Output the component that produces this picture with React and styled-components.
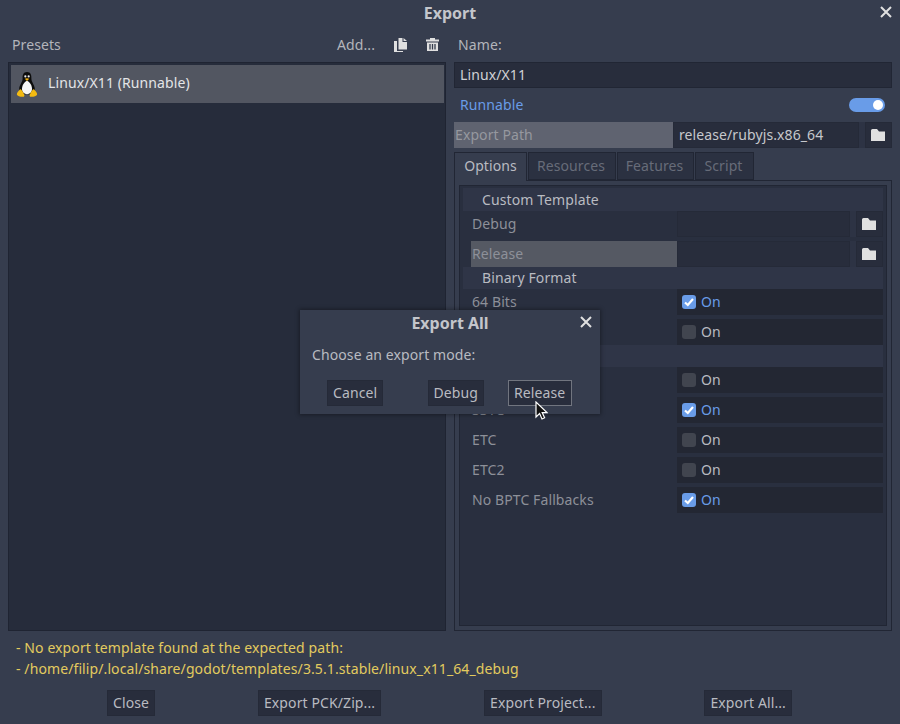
import styled, { createGlobalStyle } from "styled-components";

const GlobalStyle = createGlobalStyle`
  html, body {
    margin: 0;
    padding: 0;
    width: 900px;
    height: 724px;
    overflow: hidden;
    background: #363d4e;
  }
  * { box-sizing: border-box; }
`;

const Page = styled.div`
  position: relative;
  width: 900px;
  height: 724px;
  display: flex;
  flex-direction: column;
  background: #363d4e;
  color: #b9bbc1;
  font-family: "Noto Sans", sans-serif;
  font-size: 14px;
  line-height: 20px;
  letter-spacing: 0.1px;
`;

const TitleBar = styled.div`
  height: 26px;
  display: grid;
  grid-template-columns: 1fr auto 1fr;
  align-items: center;
  padding: 0 8px;
`;

const Title = styled.div`
  grid-column: 2;
  font-size: 16px;
  font-weight: 700;
  letter-spacing: 0;
  color: #c4c6cb;
`;

const CloseBtn = styled.svg`
  width: 12px;
  height: 12px;
  justify-self: end;
  margin-top: -2px;
  fill: none;
  stroke: #e0e0e0;
  stroke-width: 2;
`;

const Columns = styled.div`
  flex: 1;
  display: flex;
  gap: 8px;
  padding: 0 8px;
  min-height: 0;
`;

const Column = styled.div`
  width: 438px;
  display: flex;
  flex-direction: column;
`;

const HeadRow = styled.div`
  height: 36px;
  padding: 9px 4px 0 4px;
  display: flex;
  align-items: flex-start;
  color: #b3b5bb;
`;

const HeadTools = styled.div`
  margin-left: auto;
  display: flex;
  align-items: center;
`;

const AddLabel = styled.span`
  margin-right: 17px;
`;

const ToolIcon = styled.svg`
  width: 16px;
  height: 16px;
  margin-top: -1px;
  fill: #e0e0e0;
  margin-right: ${(p) => p.$right || 0}px;
`;

const PresetTree = styled.div`
  flex: 1;
  background: #262c3b;
  border: 1px solid #1f2432;
  padding: 2px 1px 2px 2px;
`;

const PresetItem = styled.div`
  height: 38px;
  background: #525661;
  color: #e4e5e7;
  display: flex;
  align-items: center;
  padding: 0 0 2px 5px;
  gap: 10px;
`;

const TuxIcon = styled.svg`
  width: 22px;
  height: 27px;
  margin-top: 3px;
`;

const NameInput = styled.div`
  height: 26px;
  background: #282d3c;
  border: 1px solid #212634;
  color: #d0d1d5;
  padding-left: 5px;
  display: flex;
  align-items: center;
`;

const SwitchRow = styled.div`
  height: 26px;
  margin-top: 4px;
  padding: 0 7px 0 6px;
  display: flex;
  align-items: center;
  justify-content: space-between;
  color: #699ce8;
`;

const Toggle = styled.div`
  width: 36px;
  height: 14px;
  border-radius: 7px;
  background: #699ce8;
  display: flex;
  align-items: center;
  justify-content: flex-end;
  padding-right: 2px;
`;

const Knob = styled.div`
  width: 10px;
  height: 10px;
  border-radius: 50%;
  background: #fff;
`;

const PathRow = styled.div`
  height: 26px;
  margin-top: 4px;
  display: grid;
  grid-template-columns: 219px 1fr;
`;

const HighlightLabel = styled.div`
  background: ${(p) => p.$bg};
  color: #96989f;
  padding-left: 1px;
  display: flex;
  align-items: center;
`;

const PathEditor = styled.div`
  display: flex;
  background: #2d3344;
`;

const LineEdit = styled.div`
  flex: 1;
  background: #282d3c;
  border: 1px solid #252a38;
  color: #c6c8cc;
  padding-left: 5px;
  display: flex;
  align-items: center;
`;

const FolderBtn = styled.div`
  width: 27px;
  margin-left: 6px;
  background: #282d3c;
  border: 1px solid #252a38;
  padding-right: 1px;
  display: flex;
  align-items: center;
  justify-content: center;
`;

const FolderIcon = styled.svg`
  width: 14px;
  height: 12px;
  fill: #e0e0e0;
`;

const TabBar = styled.div`
  height: 28px;
  margin-top: 4px;
  display: flex;
  gap: 1px;
`;

const Tab = styled.div`
  width: ${(p) => p.$w}px;
  height: ${(p) => (p.$active ? 29 : 28)}px;
  background: ${(p) => (p.$active ? "#363d4e" : "#2b3141")};
  border: 1px solid #212634;
  border-bottom: ${(p) => (p.$active ? "none" : "1px solid #212634")};
  color: ${(p) => (p.$active ? "#b9bbc1" : "#676c79")};
  position: relative;
  z-index: ${(p) => (p.$active ? 1 : 0)};
  padding-bottom: ${(p) => (p.$active ? 2 : 1)}px;
  padding-right: ${(p) => (p.$active ? 0 : 2)}px;
  display: flex;
  align-items: center;
  justify-content: center;
`;

const TabPanel = styled.div`
  flex: 1;
  border: 1px solid #212634;
  padding: 4px;
  display: flex;
`;

const OptionsTree = styled.div`
  flex: 1;
  background: #292f3f;
  border: 1px solid #212634;
  padding: 2px 3px;
`;

const Section = styled.div`
  height: ${(p) => (p.$tall ? 23 : 22)}px;
  background: #2f3547;
  color: #b9bbc1;
  padding-left: 19px;
  display: flex;
  align-items: center;
`;

const Group = styled.div`
  display: flex;
  flex-direction: column;
  gap: 4px;
`;

const Prop = styled.div`
  margin-left: 8px;
  height: 26px;
  display: grid;
  grid-template-columns: 206px 206px;
`;

const PropLabel = styled.div`
  padding-left: 1px;
  color: #8d9099;
  display: flex;
  align-items: center;
  background: ${(p) => (p.$hover ? "#555963" : "transparent")};
`;

const PropEditor = styled.div`
  display: flex;
  background: #2d3344;
`;

const CheckCell = styled.div`
  background: #232733;
  display: flex;
  align-items: center;
  padding-left: 5px;
  gap: 5px;
  color: ${(p) => (p.$on ? "#699ce8" : "#b9bbc1")};
`;

const Box = styled.div`
  width: 14px;
  height: 14px;
  border-radius: 3px;
  background: ${(p) => (p.$on ? "#699ce8" : "#41454f")};
  display: flex;
  align-items: center;
  justify-content: center;
`;

const Warnings = styled.div`
  height: 59px;
  padding: 6px 0 0 16px;
  color: #e3cb5e;
  line-height: 21px;
`;

const Footer = styled.div`
  height: 34px;
  padding: 0 5px 8px 4px;
  display: flex;
  justify-content: space-evenly;
`;

const Button = styled.div`
  height: 26px;
  ${(p) => p.$w && `width: ${p.$w}px;`}
  background: #282d3c;
  border: 1px solid ${(p) => (p.$hover ? "#71757f" : "#252a38")};
  color: #b9bbc1;
  padding: 0 5px;
  display: flex;
  align-items: center;
`;

const Modal = styled.div`
  position: absolute;
  left: 300px;
  top: 310px;
  width: 300px;
  height: 104px;
  background: #363d4e;
  box-shadow: 0 0 4px 1px rgba(0, 0, 0, 0.35);
  display: flex;
  flex-direction: column;
`;

const ModalHead = styled.div`
  height: 26px;
  display: grid;
  grid-template-columns: 1fr auto 1fr;
  align-items: center;
  padding: 0 8px;
`;

const ModalText = styled.div`
  padding-left: 12px;
  margin-top: 9px;
`;

const ModalButtons = styled.div`
  margin-top: 15px;
  padding: 0 28px 0 27px;
  display: flex;
  justify-content: space-between;
`;

const ModalSpread = styled.div`
  display: flex;
  gap: 24px;
`;

const Cursor = styled.svg`
  position: absolute;
  left: 535px;
  top: 401px;
  width: 13px;
  height: 19px;
`;

const Folder = () => (
  <FolderIcon viewBox="0 0 14 12">
    <path d="M0 1.5 Q0 0 1.5 0 H6 L8 2.5 H14 V12 H0 Z" />
  </FolderIcon>
);

const Check = () => (
  <svg width="10" height="10" viewBox="0 0 10 10" fill="none" stroke="#fff" strokeWidth="2.2">
    <path d="M1 5.5 L3.8 8 L9 2" />
  </svg>
);

const Tux = () => (
  <TuxIcon viewBox="0 0 24 28" preserveAspectRatio="none">
    <path d="M12 1 C8 1 7 4 7.2 8 C7.3 11 4 14 3.5 18 C3.2 21 5 23 8 24 H16 C19 23 20.8 21 20.5 18 C20 14 16.7 11 16.8 8 C17 4 16 1 12 1 Z" fill="#0c0c0c" />
    <path d="M12 10 C9 11 6.5 15 6.5 18.5 C6.5 22 9 24 12 24 C15 24 17.5 22 17.5 18.5 C17.5 15 15 11 12 10 Z" fill="#f6f6f6" />
    <circle cx="10.2" cy="5.6" r="1.2" fill="#eee" />
    <circle cx="13.8" cy="5.6" r="1.2" fill="#eee" />
    <path d="M9.5 8 Q12 6.8 14.5 8 L12 10.4 Z" fill="#f0b010" />
    <path d="M4.5 19 C2.5 21 0.6 23 1 24.5 C1.5 26 5.5 27 8.5 26.6 C9.8 26 9 24 8 22.5 C7 21 6 19 4.5 19 Z" fill="#f4bb12" />
    <path d="M19.5 19 C21.5 21 23.4 23 23 24.5 C22.5 26 18.5 27 15.5 26.6 C14.2 26 15 24 16 22.5 C17 21 18 19 19.5 19 Z" fill="#f4bb12" />
  </TuxIcon>
);

const CheckRow = ({ label, on }) => (
  <Prop>
    <PropLabel>{label}</PropLabel>
    <CheckCell $on={on}>
      <Box $on={on}>{on && <Check />}</Box>
      On
    </CheckCell>
  </Prop>
);

const FileRow = ({ label, hover }) => (
  <Prop>
    <PropLabel $hover={hover}>{label}</PropLabel>
    <PropEditor>
      <LineEdit />
      <FolderBtn>
        <Folder />
      </FolderBtn>
    </PropEditor>
  </Prop>
);

const X = () => (
  <CloseBtn viewBox="0 0 12 12">
    <path d="M1 1 L11 11 M11 1 L1 11" />
  </CloseBtn>
);

export default function App() {
  return (
    <Page>
      <GlobalStyle />
      <TitleBar>
        <Title>Export</Title>
        <X />
      </TitleBar>
      <Columns>
        <Column>
          <HeadRow>
            Presets
            <HeadTools>
              <AddLabel>Add...</AddLabel>
              <ToolIcon viewBox="0 0 16 16" $right={15}>
                <path d="M6.5 1 H10.5 V5 H15 V12.5 H6.5 Z M11.5 1 L15 4 H11.5 Z M2 4 H5 V14 H11 V15 H2 Z" />
              </ToolIcon>
              <ToolIcon viewBox="0 0 16 16" $right={3}>
                <path d="M7 1 H12 V2.5 H16 V4.5 H3 V2.5 H7 Z M4 5.5 H15 V14 H4 Z" />
                <path d="M7 7 V12.5 M9.5 7 V12.5 M12 7 V12.5" stroke="#363d4e" strokeWidth="1.3" />
              </ToolIcon>
            </HeadTools>
          </HeadRow>
          <PresetTree>
            <PresetItem>
              <Tux />
              Linux/X11 (Runnable)
            </PresetItem>
          </PresetTree>
        </Column>
        <Column>
          <HeadRow>Name:</HeadRow>
          <NameInput>Linux/X11</NameInput>
          <SwitchRow>
            Runnable
            <Toggle>
              <Knob />
            </Toggle>
          </SwitchRow>
          <PathRow>
            <HighlightLabel $bg="#5f6370">Export Path</HighlightLabel>
            <PathEditor>
              <LineEdit>release/rubyjs.x86_64</LineEdit>
              <FolderBtn>
                <Folder />
              </FolderBtn>
            </PathEditor>
          </PathRow>
          <TabBar>
            <Tab $active $w={73}>Options</Tab>
            <Tab $w={88}>Resources</Tab>
            <Tab $w={77}>Features</Tab>
            <Tab $w={59}>Script</Tab>
          </TabBar>
          <TabPanel>
            <OptionsTree>
              <Section $tall>Custom Template</Section>
              <Group>
                <FileRow label="Debug" />
                <FileRow label="Release" hover />
              </Group>
              <Section>Binary Format</Section>
              <Group>
                <CheckRow label="64 Bits" on />
                <CheckRow label="Embed PCK" />
              </Group>
              <Section>Texture Format</Section>
              <Group>
                <CheckRow label="BPTC" />
                <CheckRow label="S3TC" on />
                <CheckRow label="ETC" />
                <CheckRow label="ETC2" />
                <CheckRow label="No BPTC Fallbacks" on />
              </Group>
            </OptionsTree>
          </TabPanel>
        </Column>
      </Columns>
      <Warnings>
        - No export template found at the expected path:
        <br />- /home/filip/.local/share/godot/templates/3.5.1.stable/linux_x11_64_debug
      </Warnings>
      <Footer>
        <Button>Close</Button>
        <Button>Export PCK/Zip...</Button>
        <Button>Export Project...</Button>
        <Button>Export All...</Button>
      </Footer>
      <Modal>
        <ModalHead>
          <Title>Export All</Title>
          <X />
        </ModalHead>
        <ModalText>Choose an export mode:</ModalText>
        <ModalButtons>
          <Button>Cancel</Button>
          <ModalSpread>
            <Button>Debug</Button>
            <Button $hover $w={64}>Release</Button>
          </ModalSpread>
        </ModalButtons>
      </Modal>
      <Cursor viewBox="0 0 13 19">
        <path d="M1 1 V16 L4.6 12.6 L7 18 L9.6 16.8 L7.2 11.6 H12 Z" fill="#111" stroke="#fff" strokeWidth="1.2" />
      </Cursor>
    </Page>
  );
}
